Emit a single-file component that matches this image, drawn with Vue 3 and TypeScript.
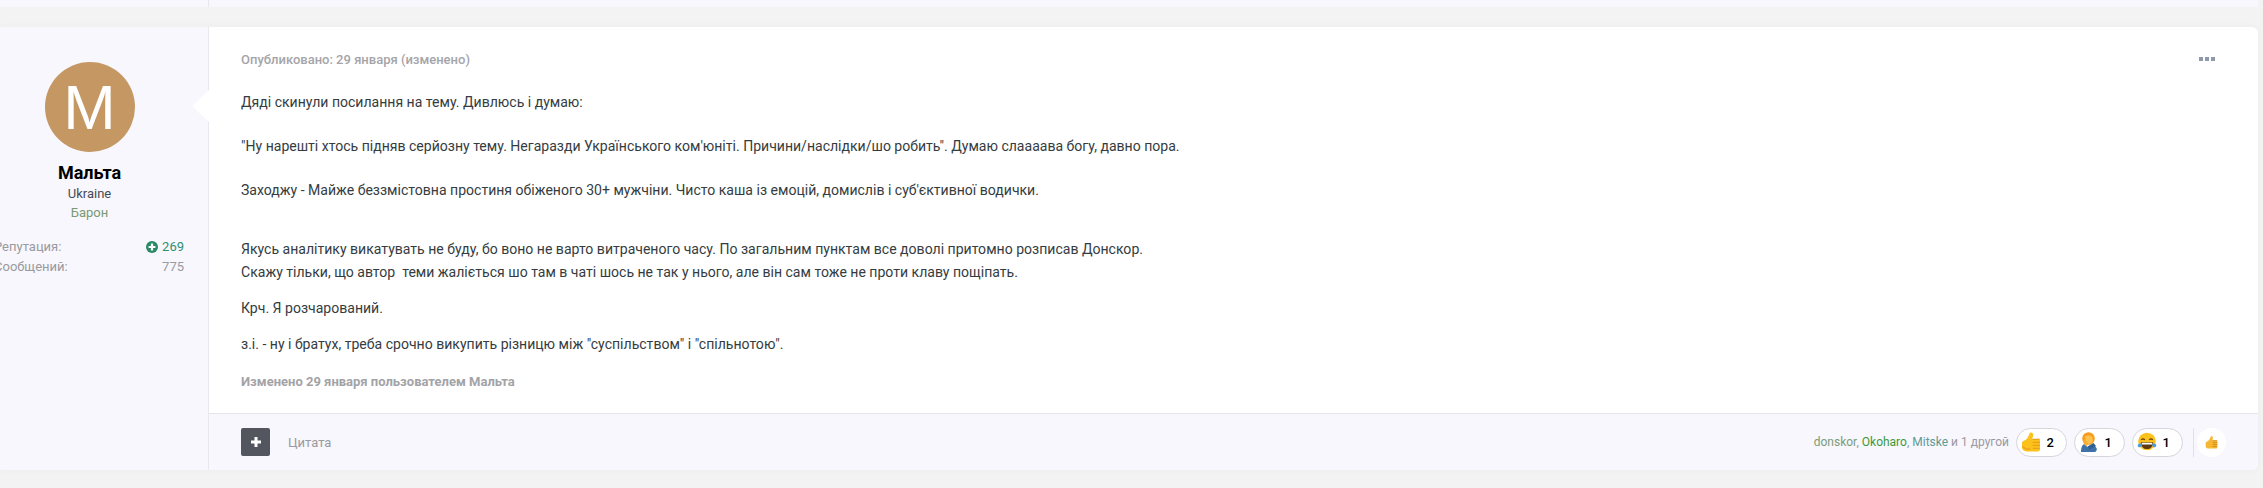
<script setup lang="ts">
const reactions = [
  { id: 'like', count: 2 },
  { id: 'facepalm', count: 1 },
  { id: 'joy', count: 1 },
]
</script>

<template>
  <div class="page">
    <div class="prev-post">
      <div class="prev-side"></div>
      <div class="prev-main"></div>
    </div>

    <article class="post">
      <aside class="author">
        <div class="avatar">M</div>
        <h3 class="name">Мальта</h3>
        <div class="country">Ukraine</div>
        <div class="rank">Барон</div>
        <ul class="stats">
          <li>
            <span>Репутация:</span>
            <span class="rep">
              <svg viewBox="0 0 12 12" width="12" height="12">
                <circle cx="6" cy="6" r="6" fill="#2a8a64" />
                <path d="M6 2.6v6.8M2.6 6h6.8" stroke="#fff" stroke-width="2.2" />
              </svg>
              269
            </span>
          </li>
          <li>
            <span>Сообщений:</span>
            <span>775</span>
          </li>
        </ul>
      </aside>

      <div class="main">
        <span class="arrow"></span>
        <div class="body">
          <div class="meta">
            <span>Опубликовано: 29 января (изменено)</span>
            <span class="dots"><i></i><i></i><i></i></span>
          </div>
          <div class="content">
            <p class="p1">Дяді скинули посилання на тему. Дивлюсь і думаю:</p>
            <p class="p2">"Ну нарешті хтось підняв серйозну тему. Негаразди Українського ком'юніті. Причини/наслідки/шо робить". Думаю слаааава богу, давно пора.</p>
            <p class="p3">Заходжу - Майже беззмістовна простиня обіженого 30+ мужчіни. Чисто каша із емоцій, домислів і суб'єктивної водички.</p>
            <p class="p4">Якусь аналітику викатувать не буду, бо воно не варто витраченого часу. По загальним пунктам все доволі притомно розписав Донскор.<br />Скажу тільки, що автор&nbsp; теми жаліється шо там в чаті шось не так у нього, але він сам тоже не проти клаву пощіпать.</p>
            <p class="p5">Крч. Я розчарований.</p>
            <p class="p5">з.і. - ну і братух, треба срочно викупить різницю між "суспільством" і "спільнотою".</p>
          </div>
          <div class="edited">Изменено 29 января пользователем Мальта</div>
        </div>

        <footer class="foot">
          <div class="actions">
            <span class="plus">
              <svg viewBox="0 0 10 10" width="10" height="10">
                <path d="M5 0v10M0 5h10" stroke="#fff" stroke-width="3" />
              </svg>
            </span>
            <span class="quote">Цитата</span>
          </div>
          <div class="likes">
            <span class="who"><span class="u1">donskor</span>, <span class="u2">Okoharo</span>, <span class="u3">Mitske</span> и 1 другой</span>
            <span v-for="r in reactions" :key="r.id" class="pill">
              <svg v-if="r.id === 'like'" viewBox="0 0 20 20" width="20" height="20">
                <path d="M1 11c0-1 .6-1.600 1.500-2C5 8 7 5.500 7.800 3.500 8.300 2 8.500 1 9.500.6c1.300-.4 2.600.5 2.700 2 .1 1.500-.6 3-1.200 4.400h6.200c1.100 0 1.800.7 1.800 1.700v8.600c0 1.300-.9 2.100-2 2.100H7c-3.200 0-6-1-6-4.200z" fill="#fcc21b" />
                <path d="M11.500 7.200h7.200M11.800 10.300h7.200M11.800 13.300h7.200M11.800 16.300h6.800" stroke="#e39a1a" stroke-width="1" fill="none" />
                <path d="M1.500 14.500c1.800 2 4.500 3 8 2.800" stroke="#eda51d" stroke-width="1.500" fill="none" />
              </svg>
              <svg v-else-if="r.id === 'facepalm'" viewBox="0 0 20 20" width="20" height="20">
                <path d="M2 20c0-4 .8-6.500 3-8l3.500 3 7-1.500 2 2.500c.8 1.500 0 3.200-1.500 4H2z" fill="#3f73a8" />
                <circle cx="9.500" cy="6.500" r="6.300" fill="#f89c1e" />
                <path d="M6 4.500c2-1.300 5.500-1.300 7.500 1v4.500c-1.500 2-4.500 2.500-6.500 1.500z" fill="#fbc34e" />
                <path d="M4.800 11.500c-1-1.800-.6-3.500.7-4.300 1.500.6 2.700 2.400 3.500 4.300l-1.300 3z" fill="#fbae33" />
                <path d="M8.500 14.500l6-3.500 2.500 3-6.500 3.500z" fill="#2f5f94" />
              </svg>
              <svg v-else viewBox="0 0 20 20" width="20" height="20">
                <circle cx="10" cy="9.500" r="8.800" fill="#fcc21b" />
                <path d="M4.300 8c.7-1.600 2.700-1.600 3.400 0M12.300 8c.7-1.600 2.700-1.600 3.400 0" stroke="#5d3a12" stroke-width="1.300" fill="none" />
                <path d="M3.800 10.200h12.400c0 4.200-2.600 6.900-6.200 6.900s-6.200-2.700-6.200-6.900z" fill="#5d3a12" />
                <path d="M4.700 10.800h10.600v1.700H4.700z" fill="#fff" />
                <path d="M1.300 12c1.300-.8 2.700-.8 3.500.5.500 1.800-1.300 3.200-3 2.700-1.300-.5-1.300-2-.5-3.200zM18.700 12c-1.300-.8-2.700-.8-3.500.5-.5 1.800 1.300 3.200 3 2.700 1.300-.5 1.300-2 .5-3.200z" fill="#4a9be0" />
              </svg>
              <b>{{ r.count }}</b>
            </span>
            <span class="sep"></span>
            <span class="like-btn">
              <svg viewBox="0 0 20 20" width="13" height="13">
                <path d="M1 11c0-1 .6-1.600 1.500-2C5 8 7 5.500 7.800 3.500 8.300 2 8.500 1 9.500.6c1.300-.4 2.600.5 2.700 2 .1 1.500-.6 3-1.200 4.400h6.200c1.100 0 1.800.7 1.800 1.700v8.600c0 1.300-.9 2.100-2 2.100H7c-3.200 0-6-1-6-4.200z" fill="#f7b733" />
                <path d="M11.500 7.200h7.200M11.800 10.300h7.200M11.800 13.300h7.200M11.800 16.300h6.800" stroke="#c98414" stroke-width="1.200" fill="none" />
              </svg>
            </span>
          </div>
        </footer>
      </div>
    </article>
  </div>
</template>

<style>
html, body {
  margin: 0;
  background: #f3f3f3;
  overflow: hidden;
}
</style>

<style scoped>
.page {
  height: 488px;
  padding-right: 5px;
  font-family: Roboto, "Liberation Sans", sans-serif;
  color: #353c41;
  overflow: hidden;
}
.prev-post {
  display: flex;
  height: 7px;
  margin-bottom: 20px;
  background: #f7f7fd;
}
.prev-side {
  width: 209px;
  box-sizing: border-box;
  border-right: 1px solid #e8e8ee;
}
.prev-main {
  flex: 1;
}
.post {
  display: flex;
  height: 443px;
  background: #fff;
  border-radius: 0 6px 6px 0;
  box-shadow: 0 0 8px rgba(0, 0, 0, 0.03);
  overflow: hidden;
}
.author {
  flex: none;
  box-sizing: border-box;
  width: 239px;
  margin-left: -30px;
  padding: 35px 23px 0 24px;
  background: #f7f7fd;
  border-right: 1px solid #e8e8ee;
  text-align: center;
}
.avatar {
  width: 90px;
  height: 90px;
  margin: 0 auto;
  border-radius: 50%;
  background: #c49763;
  color: #fff;
  font: 400 63px/90px "Liberation Sans", sans-serif;
}
.name {
  margin: 10px 0 0;
  font-size: 18px;
  line-height: 22px;
  font-weight: 700;
  color: #000;
}
.country {
  margin-top: 1px;
  font-size: 13px;
  line-height: 18px;
  color: #454b52;
}
.rank {
  margin-top: 0;
  font-size: 13px;
  line-height: 19px;
  color: #7a9a72;
}
.stats {
  list-style: none;
  margin: 15px 1px 0 0;
  padding: 0;
  font-size: 13px;
  line-height: 20px;
  color: #9a9a9f;
}
.stats li {
  display: flex;
  justify-content: space-between;
}
.rep {
  display: inline-flex;
  align-items: center;
  gap: 4px;
  color: #2f8f70;
}
.main {
  position: relative;
  flex: 1;
  display: flex;
  flex-direction: column;
  min-width: 0;
}
.arrow {
  position: absolute;
  left: -17px;
  top: 63px;
  border: 16px solid transparent;
  border-left: 0;
  border-right: 17px solid #fff;
}
.body {
  flex: 1;
  padding: 25px 43px 0 32px;
}
.meta {
  display: flex;
  justify-content: space-between;
  align-items: center;
  height: 14px;
  font-size: 13px;
  font-weight: 500;
  color: #a5a5a9;
}
.dots {
  display: flex;
  gap: 2px;
}
.dots i {
  width: 4px;
  height: 4px;
  background: #8f99ad;
}
.content {
  margin-top: 25px;
  font-size: 14.05px;
  line-height: 23px;
  color: #353c41;
}
.content p {
  margin: 0;
}
.p2,
.p3 {
  margin-top: 21px !important;
}
.p4 {
  margin-top: 36px !important;
}
.p5 {
  margin-top: 13px !important;
}
.edited {
  margin-top: 18px;
  font-size: 13px;
  line-height: 16px;
  font-weight: 700;
  color: #a3a3a7;
}
.foot {
  display: flex;
  justify-content: space-between;
  align-items: center;
  height: 56px;
  padding: 0 32px;
  background: #f7f7fd;
  border-top: 1px solid #e4e4ea;
}
.actions {
  display: flex;
  align-items: center;
  gap: 18px;
}
.plus {
  display: flex;
  align-items: center;
  justify-content: center;
  width: 29px;
  height: 28px;
  border-radius: 2px;
  background: #53555f;
}
.quote {
  font-size: 13px;
  color: #9a9aa2;
}
.likes {
  display: flex;
  align-items: center;
}
.who {
  margin-right: 7px;
  font-size: 12px;
  color: #9a9aa2;
}
.u1 { color: #7c9c7c; }
.u2 { color: #3d9a3a; }
.u3 { color: #5f9a96; }
.pill {
  box-sizing: border-box;
  display: flex;
  align-items: center;
  justify-content: space-between;
  width: 51px;
  height: 29px;
  margin-right: 7px;
  padding: 0 12px 0 4px;
  border: 1px solid #d5d5dc;
  border-radius: 15px;
  background: #fff;
  font-size: 13px;
  color: #000;
}
.pill b {
  font-weight: 500;
}
.sep {
  width: 1px;
  height: 29px;
  margin: 0 3px 0 3px;
  background: #e0e0e6;
}
.like-btn {
  display: flex;
  align-items: center;
  justify-content: center;
  width: 29px;
  height: 29px;
  border-radius: 50%;
  background: #fff;
}
</style>
